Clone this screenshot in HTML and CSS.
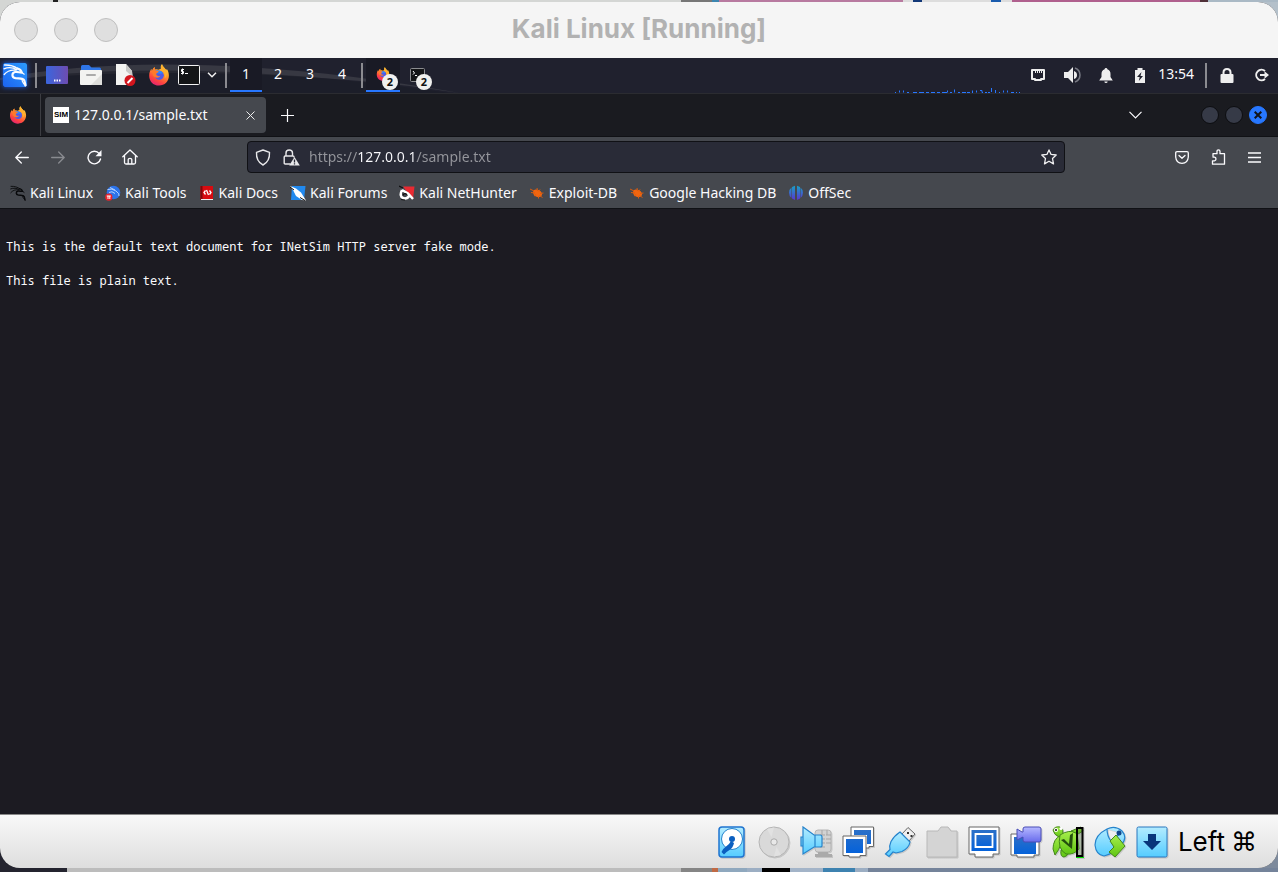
FILE: index.html
```html
<!DOCTYPE html>
<html lang="en">
<head>
<meta charset="utf-8">
<title>Kali Linux [Running]</title>
<link rel="stylesheet" href="styles.css">
</head>
<body>
<svg class="defs" aria-hidden="true">
  <defs>
    <linearGradient id="fire" x1="0.8" y1="0" x2="0.3" y2="1"><stop offset="0" stop-color="#ffe14a"/><stop offset=".4" stop-color="#ff9a2b"/><stop offset=".75" stop-color="#ff4540"/><stop offset="1" stop-color="#e62370"/></linearGradient>
    <linearGradient id="kaliBlue" x1="0" y1="1" x2="1" y2="0"><stop offset="0" stop-color="#1c63f0"/><stop offset="1" stop-color="#2c9bff"/></linearGradient>
    <linearGradient id="desk" x1="0" y1="0" x2="1" y2="0"><stop offset="0" stop-color="#3a66de"/><stop offset="1" stop-color="#6e4cb0"/></linearGradient>
    <linearGradient id="sky" x1="0" y1="0" x2="0" y2="1"><stop offset="0" stop-color="#b4ecff"/><stop offset="1" stop-color="#55ccff"/></linearGradient>
    <linearGradient id="royal" x1="0" y1="0" x2="0" y2="1"><stop offset="0" stop-color="#2b70c8"/><stop offset="1" stop-color="#0562da"/></linearGradient>
    <linearGradient id="cam" x1="0" y1="0" x2="0" y2="1"><stop offset="0" stop-color="#b5b8ff"/><stop offset="1" stop-color="#686bec"/></linearGradient>
    <linearGradient id="leaf" x1="0" y1="0" x2="0" y2="1"><stop offset="0" stop-color="#a6ee4c"/><stop offset="1" stop-color="#5fc512"/></linearGradient>
    <linearGradient id="off" x1="0" y1="0" x2="0" y2="1"><stop offset="0" stop-color="#18a0c8"/><stop offset="1" stop-color="#5a35cf"/></linearGradient>
    <symbol id="firefox" viewBox="0 0 24 24">
      <path fill="url(#fire)" d="M12 23.5C5.500 23.500 1.300 18.500 1.300 12.700 1.300 9.300 2.600 6.800 3.700 5.300L4.300 7.500C5 5.500 6 4 7.200 3.200L7.500 6C9 5.300 10.600 5.600 11.500 6.300L14.200 5C13.500 3.300 14 1.500 15.300.400 16 3 18.400 4.500 20 6.800L20.400 5.200C22 7.400 22.800 10 22.800 12.800 22.800 18.700 18.300 23.500 12 23.500Z"/>
      <circle cx="12.300" cy="12.400" r="5" fill="#515ae6"/>
      <path fill="#2e86ff" d="M7.400 7.200C10 6.500 14 6.600 16.500 10L13.500 10.500 9 10Z"/>
      <path fill="#ffb12e" d="M15.300.400C16 3 18.400 4.500 20 6.800 21.500 9.500 20.800 13.500 18.200 15.700 19 12 18 8.500 15.500 7.200 14 5.500 13.500 2.500 15.300.400Z"/>
      <path fill="#ff7a2b" d="M3.700 5.300 4.300 7.500 7.200 3.200 7.500 6.500C9 6.700 9.300 7.600 11.800 7.900 11.800 9.500 9 9.500 9 11 9 12.500 11 14 13.500 12.800 12.500 15.300 8 16 5.500 12.500Z"/>
    </symbol>
    <symbol id="dragon" viewBox="0 0 24 24">
      <g fill="none" stroke="currentColor" stroke-linecap="round">
        <path stroke-width="1.300" d="M1.500 2C7 1.800 11 3 14.500 5.500M1 5.800C5 4.200 10 4.500 14 6.800M1.200 11.500C4 8 8 6.600 13 7.200"/>
        <path stroke-width="2.200" d="M14.500 5.500C17 6.300 18.300 7.500 18.800 9.500 17 9.800 14.500 8.500 12 9 8.500 10 8.500 14.500 12.500 15.200 17 15.700 20 15 21.300 17.500 21.900 19.500 22.300 21 22.500 22.500"/>
        <path stroke-width="1.200" d="M18.800 9.500 21.200 11.200M19.500 15.500C18 17.500 19.500 19.500 22.500 22.500"/>
      </g>
    </symbol>
    <symbol id="spider" viewBox="0 0 16 16">
      <ellipse cx="8.500" cy="8.300" rx="4.800" ry="3.500" fill="#f06510" transform="rotate(28 8.500 8.300)"/>
      <path stroke="#d85c10" stroke-width="1" fill="none" d="M1 4 5 6M2 7.500 6 8M5 11 7 9.500M8 3 8.500 6M11 4.500 10 6.500M14.500 8 11 8.500M13.500 12.500 10.500 10.500M9.500 13.500 9.500 11"/>
    </symbol>
  </defs>
</svg>

<div class="backdrop-top"></div>
<main class="vm">
  <header class="titlebar">
    <div class="lights">
      <button class="light" aria-label="Close window"></button>
      <button class="light" aria-label="Minimise window"></button>
      <button class="light" aria-label="Zoom window"></button>
    </div>
    <h1 class="title">Kali Linux [Running]</h1>
  </header>

  <nav class="panel" aria-label="Desktop panel">
    <svg class="streak" viewBox="0 0 460 35" aria-hidden="true"><path fill="#373842" d="M0 20C110 0 260 0 460 35 300 10 120 12 0 22Z"/><path fill="#1b1c27" d="M60 16C180 8 300 14 450 35H0V24Z" opacity=".6"/></svg>
    <button class="kali" aria-label="Applications"><svg width="24" height="24" viewBox="0 0 24 24"><rect width="24" height="24" rx="2" fill="url(#kaliBlue)"/><use href="#dragon" width="24" height="24"/></svg></button>
    <i class="sep"></i>
    <button class="launch" aria-label="Show desktop"><svg width="22" height="18" viewBox="0 0 22 18"><rect width="22" height="18" rx="1" fill="url(#desk)"/><path stroke="#fff" stroke-width="2" stroke-dasharray="1.500 1" d="M8 14.500h6.500"/></svg></button>
    <button class="launch" aria-label="File manager"><svg width="22" height="20" viewBox="0 0 22 20"><path fill="#2f76e8" d="M1 6V1.500Q1 0 2.500 0H9l2.500 2.500H19.500Q21 2.500 21 4V8H1Z"/><rect y="5" width="22" height="15" rx="1" fill="#f3f3f1"/><path fill="#dededb" d="M22 9V20H11Z"/><path stroke="#aaa" stroke-width="2" stroke-linecap="round" d="M7 10h8"/></svg></button>
    <button class="launch" aria-label="Text editor"><svg width="22" height="22" viewBox="0 0 22 22"><path fill="#f4f4f2" d="M2 0H12L18 7V21H2Z"/><path fill="#c9c9c7" d="M12 0 18 7 19 13 12 7Z"/><circle cx="16" cy="16.500" r="5.500" fill="#d3151d"/><path stroke="#fff" stroke-width="2" d="M13.500 19 18.500 14"/></svg></button>
    <button class="launch" aria-label="Firefox"><svg width="22" height="22"><use href="#firefox"/></svg></button>
    <button class="launch term" aria-label="Terminal"><svg width="22" height="20" viewBox="0 0 22 20"><rect x=".5" y=".5" width="21" height="19" rx="1" fill="#141517" stroke="#f2f2f2"/><path fill="none" stroke="#fff" d="M6 4.500H3.500V6.500H5.500V8.500H3M4.500 3.500V9.500M7 8.500H10"/></svg></button>
    <button class="more" aria-label="More terminals"><svg width="10" height="6" viewBox="0 0 10 6"><path fill="none" stroke="#eee" stroke-width="1.500" d="M1 .7 5 4.700 9 .7"/></svg></button>
    <i class="sep"></i>
    <button class="space current">1</button>
    <button class="space">2</button>
    <button class="space">3</button>
    <button class="space">4</button>
    <i class="sep"></i>
    <button class="task current" aria-label="Firefox windows"><svg width="14" height="14"><use href="#firefox"/></svg><span class="badge">2</span></button>
    <button class="task" aria-label="Terminal windows"><svg width="15" height="14" viewBox="0 0 15 14"><rect x=".5" y=".5" width="14" height="13" rx="1" fill="#141517" stroke="#8c8d90"/><path fill="none" stroke="#fff" d="M3 3 4.500 5 3 6.500M5 7.500H7"/></svg><span class="badge">2</span></button>
    <svg class="cpu" width="126" height="5" viewBox="0 0 126 5" aria-hidden="true"><path stroke="#2777ff" stroke-width="1" fill="none" d="M0 4.500H1M4.500 2.500V4.500M8.500 2.500V4.500M12 4.500H14M18 4.500H22M24 4.500H29M31 4.500H34M36 4.500H40M42 4.500H45M47 4.500H52M52.500 2.500V4.500M55 4.500H57M59.500 1.500V4.500M63 4.500H65M67 4.500H71M72 4.500H75M77.500 2.500V5M81.500 2.500V4.500M85 2.500H87V4.500H88M90 4.500H92M93 4.500H95M96.500 0V4M100.500 2V5M104 4.500H105M108.500 2.500V4.500M112.500 2.500V4.500M116 4.500H119M121 4.500H122M124 4.500H125"/></svg>
    <button class="tray" aria-label="Network"><svg width="14" height="12" viewBox="0 0 14 12"><path fill="none" stroke="#eee" stroke-width="2" stroke-linejoin="round" d="M1 1H13V10H10V11H4V10H1Z"/><path stroke="#eee" d="M4.500 1V4M6.500 1V4M8.500 1V4M10.500 1V4"/></svg></button>
    <button class="tray" aria-label="Volume"><svg width="17" height="16" viewBox="0 0 17 16"><path fill="#eee" d="M0 5H4L9 0V16L4 11H0ZM10 4Q13 5 13 8T10 12Z"/><path fill="none" stroke="#777983" stroke-width="1.500" d="M11 1Q16 3 16 8T11 15"/></svg></button>
    <button class="tray" aria-label="Notifications"><svg width="14" height="15" viewBox="0 0 14 15"><path fill="#eee" d="M7 0Q8.300 0 8.400 1.300 11.500 2.300 11.500 6V9L13.800 12.500H.2L2.500 9V6Q2.500 2.300 5.600 1.300 5.700 0 7 0ZM5.300 13.500H8.700Q8.500 15 7 15T5.300 13.500Z"/></svg></button>
    <button class="tray" aria-label="Battery"><svg width="10" height="15" viewBox="0 0 10 15"><path fill="#eee" d="M2.500 0H7.500V2H10V15H0V2H2.500Z"/><path fill="#20212d" d="M6.500 4 2 9H4.700L3.800 13 8 8H5.500Z"/></svg></button>
    <time class="clock">13:54</time>
    <i class="sep"></i>
    <button class="tray" aria-label="Lock screen"><svg width="14" height="15" viewBox="0 0 14 15"><rect x=".5" y="6" width="13" height="9" rx="1" fill="#eee"/><path fill="none" stroke="#eee" stroke-width="2" d="M3.500 7V4.500Q3.500 1 7 1T10.500 4.500V7"/></svg></button>
    <button class="tray" aria-label="Log out"><svg width="15" height="14" viewBox="0 0 15 14"><path fill="none" stroke="#eee" stroke-width="2" d="M11 3A5.300 5.300 0 1 0 11 11"/><path fill="#eee" d="M6 6H10.500V3.300L15 7 10.500 10.700V8H6Z"/></svg></button>
  </nav>

  <div class="tabs">
    <button class="view" aria-label="Firefox View"><svg width="18" height="18"><use href="#firefox"/></svg></button>
    <div class="tab">
      <span class="favicon">SIM</span>
      <span class="tab-name">127.0.0.1/sample.txt</span>
      <button class="tab-close" aria-label="Close tab"><svg width="9" height="9" viewBox="0 0 9 9"><path stroke="#eee" d="M.5.5 8.500 8.500M8.500.5.5 8.500"/></svg></button>
    </div>
    <button class="new-tab" aria-label="New tab"><svg width="13" height="13" viewBox="0 0 13 13"><path stroke="#fbfbfe" d="M6.500 0V13M0 6.500H13" stroke-width="1.200"/></svg></button>
    <button class="all-tabs" aria-label="List all tabs"><svg width="13" height="8" viewBox="0 0 13 8"><path fill="none" stroke="#fbfbfe" stroke-width="1.200" d="M.5.8 6.500 6.800 12.500.8"/></svg></button>
    <div class="window-buttons">
      <button class="dot" aria-label="Minimise"></button>
      <button class="dot" aria-label="Maximise"></button>
      <button class="dot close" aria-label="Close"><svg width="8" height="8" viewBox="0 0 8 8"><path stroke="#11131a" stroke-width="2" d="M.7.7 7.300 7.300M7.300.7.7 7.300"/></svg></button>
    </div>
  </div>

  <div class="toolbar">
    <button class="tool" aria-label="Back"><svg width="14" height="13" viewBox="0 0 14 13"><path fill="none" stroke="#fbfbfe" stroke-width="1.300" stroke-linecap="round" stroke-linejoin="round" d="M13.300 6.500H.8M6.300 1 .8 6.500 6.300 12"/></svg></button>
    <button class="tool" aria-label="Forward" disabled><svg width="14" height="13" viewBox="0 0 14 13"><path fill="none" stroke="#898b90" stroke-width="1.300" stroke-linecap="round" stroke-linejoin="round" d="M.7 6.500H13.200M7.700 1 13.200 6.500 7.700 12"/></svg></button>
    <button class="tool" aria-label="Reload"><svg width="15" height="15" viewBox="0 0 15 15"><path fill="none" stroke="#fbfbfe" stroke-width="1.400" stroke-linecap="round" d="M13.500 9A6.300 6.300 0 1 1 12.300 3.600"/><path fill="#fbfbfe" d="M14.500 0V6.300H8.500Z"/></svg></button>
    <button class="tool" aria-label="Home"><svg width="16" height="16" viewBox="0 0 16 16"><path fill="none" stroke="#fbfbfe" stroke-width="1.300" stroke-linecap="round" stroke-linejoin="round" d="M.8 7.800 8 1 15.200 7.800M2.500 6.500V13.500Q2.500 15 4 15H12Q13.500 15 13.500 13.500V6.500M6.200 15V10.500Q6.200 9.300 8 9.300T9.800 10.500V15"/></svg></button>
    <div class="address">
      <button class="inner" aria-label="Tracking protection"><svg width="16" height="17" viewBox="0 0 16 17"><path fill="none" stroke="#e8e8ea" stroke-width="1.400" stroke-linejoin="round" d="M8 1 14.500 3.300Q15 12.500 8 16 1 12.500 1.500 3.300Z"/></svg></button>
      <button class="inner" aria-label="Connection not secure"><svg width="17" height="17" viewBox="0 0 17 17"><path fill="none" stroke="#e8e8ea" stroke-width="1.400" stroke-linejoin="round" d="M7.500 15H2.200Q1.200 15 1.200 14V8Q1.200 7 2.200 7H10Q11 7 11 8V8.500M3 7V4Q3 1 6.200 1T9.500 4V7"/><path fill="#e8e8ea" d="M11.500 8 16.800 16.500H6.200Z"/><path stroke="#292b37" stroke-width="1.300" d="M11.500 10.500V13.500M11.500 14.300V15.500"/></svg></button>
      <input class="url" aria-label="Address" value="https://127.0.0.1/sample.txt">
      <button class="inner" aria-label="Bookmark this page"><svg width="16" height="16" viewBox="0 0 16 16"><path fill="none" stroke="#f0f0f2" stroke-width="1.300" stroke-linejoin="round" d="M8 .9 10.100 5.400 15.200 6 11.500 9.500 12.500 14.900 8 12.200 3.500 14.900 4.500 9.500.8 6 5.900 5.400Z"/></svg></button>
    </div>
    <button class="tool" aria-label="Save to Pocket"><svg width="14" height="13" viewBox="0 0 14 13"><path fill="none" stroke="#fbfbfe" stroke-width="1.300" stroke-linecap="round" stroke-linejoin="round" d="M2 .7H12Q13.300.7 13.300 2V6Q12.800 12.300 7 12.300T.7 6V2Q.7.7 2 .7ZM4 4.500 7 7.300 10 4.500"/></svg></button>
    <button class="tool" aria-label="Extensions"><svg width="15" height="16" viewBox="0 0 15 16"><path fill="none" stroke="#fbfbfe" stroke-width="1.300" stroke-linejoin="round" d="M2 7.500V4.700H6V2.500Q6 .8 7.500.8T9 2.500V4.700H13.500V15.200H1.500V11.800H3.500Q5 11.500 5 10T3.500 8.200H1.500"/></svg></button>
    <button class="tool" aria-label="Application menu"><svg width="13" height="11" viewBox="0 0 13 11"><path stroke="#fbfbfe" stroke-width="1.300" d="M0 1H13M0 5.500H13M0 10H13"/></svg></button>
  </div>

  <nav class="bookmarks" aria-label="Bookmarks">
    <a href="#"><svg class="black" width="16" height="16"><use href="#dragon"/></svg>Kali Linux</a>
    <a href="#"><svg width="16" height="16" viewBox="0 0 16 16"><circle cx="8.500" cy="7.500" r="6.800" fill="#2b73ea"/><path fill="none" stroke="#b4d2ff" d="M2.500 4.500Q7 3 11 6T14 11M4 7.500Q7 5.500 10 8.500M5 2.500 10 5"/><circle cx="3.800" cy="12.200" r="3.600" fill="#e9232b"/><path fill="none" stroke="#fff" d="M1.800 11H5.800M3 11V14M4.800 11V14"/></svg>Kali Tools</a>
    <a href="#"><svg width="16" height="16" viewBox="0 0 16 16"><path fill="#d80b10" d="M1.500 1H14V15H1.500Z"/><path fill="#7d070b" d="M1.500 1H3.500V15H1.500Z"/><path stroke="#eee" d="M2 14.500H14"/><path fill="none" stroke="#fff" stroke-width="1.300" d="M6.500 5.500 5 7.500 6.500 9.500M10.500 5.500 12 7.500 10.500 9.500M7.500 5 9.500 10"/></svg>Kali Docs</a>
    <a href="#"><svg width="16" height="16" viewBox="0 0 16 16"><path fill="#2189ee" d="M2 1H15.500L14 15H1Z"/><path fill="#fff" d="M0 1 6 3.500 11 7.500 16 15.500 12 15 6 11 3.500 6Z"/><path stroke="#111" d="M0 2 4 5M10 12.500 15 15.500"/></svg>Kali Forums</a>
    <a href="#"><svg width="16" height="16" viewBox="0 0 16 16"><path fill="#e92a32" d="M4 1.500H15.500L14 14.500 10 10Z"/><path fill="none" stroke="#fff" stroke-width="2.500" d="M3 5Q0 11 4 13 8 14.500 10.500 10.500M3 5 9 8.500 14 14"/><path stroke="#111" stroke-width="1.200" fill="none" d="M0 1 4 3M4 10.500Q5 7.500 8 9.500M2 14.500 6 15"/></svg>Kali NetHunter</a>
    <a href="#"><svg width="16" height="16"><use href="#spider"/></svg>Exploit-DB</a>
    <a href="#"><svg width="16" height="16"><use href="#spider"/></svg>Google Hacking DB</a>
    <a href="#"><svg width="16" height="16" viewBox="0 0 16 16"><path fill="url(#off)" d="M3.500 2.500V13Q1 11 1 7.700T3.500 2.500ZM4 2 7 .8V15L4 13.500ZM9 .8 12 2V13.500L9 15ZM12.500 2.500Q15 4.500 15 7.700T12.500 13Z"/></svg>OffSec</a>
  </nav>

  <section class="page">
<pre class="document">

This is the default text document for INetSim HTTP server fake mode.

This file is plain text.
</pre>
  </section>

  <footer class="status">
    <button class="device" aria-label="Hard disks"><svg viewBox="0 0 32 32"><rect x="3" y="1" width="25" height="30" rx="3" fill="url(#sky)" stroke="#1f74d0" stroke-width="1.500"/><circle cx="16" cy="13" r="10.500" fill="#fff" stroke="#2583cc" stroke-width="1"/><circle cx="16" cy="13" r="3" fill="#0b5fc0"/><path fill="#0b5fc0" d="M15 15 18 17Q17 22 13.500 24 10 26 8 28.500L5.500 26Q7 22.500 10 20.500 13 19 15 15Z"/></svg></button>
    <button class="device" aria-label="Optical drives"><svg viewBox="0 0 32 32"><circle cx="16" cy="16" r="15" fill="#d9d9d9" stroke="#b4b4b4"/><circle cx="16" cy="16" r="3.200" fill="#e8e8e8" stroke="#aaa"/><path fill="#e1e1e1" d="M16 1.500 13.500 11 9 3ZM16 30.500 18.500 21 23 29Z"/></svg></button>
    <button class="device" aria-label="Audio"><svg viewBox="0 0 32 32"><rect x="15" y="4" width="16" height="22" rx="3" fill="#d2d2d2" stroke="#b5b5b5"/><path stroke="#a5a5a5" fill="none" d="M20 9H25M20 13H25M20 17H25M20 21H25M26 9H31M26 13H31M26 17H31M22 4V9M27 4V9"/><path fill="#aaa" d="M18 26H28V28H32V31H15V28H18Z"/><path fill="url(#sky)" stroke="#2583cc" stroke-width="1.200" d="M1 11H3V20H1ZM3 1 14 9H20Q22 9 22 11V20Q22 21 20 21H14L3 28ZM15 9V21"/></svg></button>
    <button class="device" aria-label="Network"><svg viewBox="0 0 32 32"><g fill="#fff" stroke="#666"><path d="M9 1H31.500V20.500H27V22H14V20.500H9Z"/><path d="M1 10H24V29.500H18V31H7V29.500H1Z"/></g><path fill="url(#royal)" d="M12 4H29V18H25V9H12ZM4 13H21V27H4Z"/></svg></button>
    <button class="device" aria-label="USB"><svg viewBox="0 0 32 32"><path fill="#eee" stroke="#666" d="M24 1.500 31 8 25 15 18 8Z"/><path fill="#333" d="M23 6h2v2h-2zM26.500 9h2v2h-2z"/><path fill="url(#sky)" stroke="#2583cc" stroke-width="1.200" d="M16 6 26 16Q25 22 18 25.500L12 27 9 26 5 30.500 1.500 28 6 23.500Q5 20 7 15.500 10 10 16 6Z"/></svg></button>
    <button class="device" aria-label="Shared folders"><svg viewBox="0 0 32 32"><path fill="#d4d4d4" stroke="#b8b8b8" d="M1 5H12L15 1H22L25 5H31V31H1Z"/></svg></button>
    <button class="device" aria-label="Display"><svg viewBox="0 0 32 32"><path fill="#fff" stroke="#666" d="M1 1H31V28H25V31H7V28H1Z"/><path fill="url(#royal)" d="M3.500 4H28.500V25H3.500Z"/><path fill="url(#royal)" stroke="#fff" stroke-width="1.800" d="M7.500 8H24.500V21H7.500Z"/></svg></button>
    <button class="device" aria-label="Recording"><svg viewBox="0 0 32 32"><path fill="#fff" stroke="#666" d="M1 8H29V29H24V31H7V29H1Z"/><path fill="url(#royal)" d="M4 11H26V28H4Z"/><path fill="url(#cam)" stroke="#494cb5" d="M7 3 12 6H13V3Q13 1 15 1H29Q31 1 31 3V14Q31 16 29 16H15Q13 16 13 14V11L7 14Z"/></svg></button>
    <button class="device" aria-label="CPU execution"><svg viewBox="0 0 32 32"><g fill="url(#leaf)" stroke="#43861a"><path d="M9 9Q1 13 1 23L3 29Q7 24 9 18ZM9 24Q8 31 12 31 16 30 16 27Z"/><path d="M1 4Q3 0 8 1 12 4 11 8L7 11Q2 9 1 4Z"/><path d="M8 9Q17 3 25 7L27 23Q22 29 14 28 5 23 8 9Z"/><path d="M19 5 29 1 31 5 26 8Z"/></g><circle cx="4" cy="4" r="2" fill="#fff"/><circle cx="4" cy="4" r="1" fill="#111"/><circle cx="9" cy="2.500" r="1.500" fill="#fff"/><path fill="#244f0e" d="M9 14 12 13 17 18 18 9 21 7 20 23Z"/><rect x="25" y="2" width="6" height="28" fill="#5f8050" fill-opacity=".4"/><path fill="none" stroke="#000" stroke-width="2" d="M25 30V2H30.500V30Z"/><path stroke="#0d0" d="M24 31.500H32"/></svg></button>
    <button class="device" aria-label="Mouse integration"><svg viewBox="0 0 32 32"><path fill="url(#sky)" stroke="#2583cc" stroke-width="1.200" d="M13 3Q21-1 28 5 34 12 27 19 19 28 10 30 2 29 1 19 1 9 13 3ZM13 3Q13 10 17 15L27 7"/><circle cx="25" cy="7" r="2.500" fill="#104589"/><path fill="url(#leaf)" stroke="#43861a" d="M16 15 22 9 31 20 21 31 15 26 20 21Z"/></svg></button>
    <button class="device" aria-label="Keyboard capture"><svg viewBox="0 0 32 32"><rect x="1" y="1" width="30" height="30" rx="1.500" fill="url(#sky)" stroke="#2876be"/><path fill="#08357b" d="M12 8H20V15H25L16 24 7 15H12Z"/></svg></button>
    <span class="host-key">Left <span class="command">⌘</span></span>
  </footer>
</main>
<div class="backdrop-bottom"></div>
</body>
</html>
```
FILE: styles.css
```css
* { box-sizing: border-box; }

body {
  margin: 0;
  height: 100vh;
  display: flex;
  flex-direction: column;
  overflow: hidden;
  background:
    linear-gradient(90deg, #d4d6d4 50%, #b4c0ca 50%) top / 100% 50% no-repeat,
    linear-gradient(90deg, #24242f 50%, #7d8a9c 50%);
  font-family: "Noto Sans", sans-serif;
  font-size: 14px;
  line-height: 20px;
  color: #fbfbfe;
}

button {
  display: flex;
  align-items: center;
  justify-content: center;
  flex: none;
  padding: 0;
  border: 0;
  background: none;
  color: inherit;
  font: inherit;
}

svg { display: block; flex: none; }
.defs { position: absolute; width: 0; height: 0; }

.backdrop-top {
  flex: none;
  height: 2px;
  background: linear-gradient(90deg, #d4d6d4 53px, #222 53px 58px, #d4d6d4 58px 681px, #777 681px 712px, #3c86b0 712px 719px, #b87aa0 719px 903px, #ddd 903px 913px, #123878 913px 922px, #ddd 922px 991px, #1a5cae 991px 1001px, #ddd 1001px 1012px, #b0608e 1012px 1200px, #503038 1200px 1208px, #aab9c5 1208px);
}

.backdrop-bottom {
  flex: none;
  height: 4px;
  background: linear-gradient(90deg, #24242f 67px, #bcbcbc 67px 681px, #858585 681px 712px, #c06a45 712px 718px, #8fa8be 718px 747px, #9caec3 747px 762px, #000 762px 790px, #a3b4c8 790px 823px, #3d82b0 823px 855px, #9caec3 855px 868px, #74839a 868px);
}

.vm {
  flex: 1;
  min-height: 0;
  display: flex;
  flex-direction: column;
  overflow: hidden;
  border-radius: 20px;
  background: #1c1b22;
}

.titlebar {
  flex: none;
  display: grid;
  grid-template-columns: 1fr auto 1fr;
  align-items: center;
  height: 56px;
  padding: 0 14px;
  background: #f5f5f5;
}

.lights { display: flex; gap: 16px; }

.light {
  width: 24px;
  height: 24px;
  border: 1px solid #bfbfbf;
  border-radius: 50%;
  background: #dfdfdf;
}

.title {
  margin: 0;
  padding-bottom: 2px;
  font: 700 26px/32px Inter, sans-serif;
  color: #b2b2b2;
}

.panel {
  position: relative;
  flex: none;
  display: flex;
  align-items: flex-start;
  height: 36px;
  border-bottom: 1px solid #2b2c31;
  background: #20212e;
}

.panel > * { position: relative; }
.panel > .streak { position: absolute; left: 0; top: 0; width: 460px; height: 35px; }

.kali { width: 32px; height: 34px; }
.kali svg { margin-right: 2px; box-shadow: 0 0 5px #1e5ce0; }
.sep { flex: none; width: 2px; height: 25px; margin: 5px 3px; background: #8b8b90; }
.launch { width: 34px; height: 34px; }
.launch.term { width: 26px; }
.more { width: 20px; height: 34px; }
.space { width: 32px; height: 34px; padding-bottom: 2px; }
.task { width: 34px; height: 34px; }
.current { padding-bottom: 0; border-bottom: 2px solid #2777ff; background: #191a25; }

.badge {
  position: absolute;
  right: 2px;
  bottom: 2px;
  width: 16px;
  height: 16px;
  border-radius: 50%;
  background: #f0f0ee;
  color: #111;
  font: 700 11px/16px "Noto Sans", sans-serif;
}
.task.current .badge { bottom: 0; }

.cpu { align-self: flex-end; margin-left: auto; }
.tray { width: 34px; height: 34px; }
.clock { margin: 6px 8px 0 1px; }

.tabs {
  flex: none;
  display: flex;
  align-items: center;
  height: 43px;
  border-bottom: 1px solid #101115;
  background: #1a1b20;
}

.view { width: 41px; height: 42px; padding-right: 4px; border-right: 1px solid #3c3d42; }

.tab {
  display: flex;
  align-items: center;
  width: 221px;
  height: 36px;
  margin: 0 4px;
  padding-left: 8px;
  border-radius: 4px;
  background: #45484e;
}

.favicon {
  width: 16px;
  height: 16px;
  margin-right: 5px;
  background: #fff;
  color: #000;
  font: 700 8px/16px "Liberation Sans", sans-serif;
  text-align: center;
}

.tab-name { flex: 1; }
.tab-close { width: 32px; height: 32px; }
.new-tab { width: 35px; height: 36px; }
.all-tabs { width: 36px; height: 36px; margin-left: auto; margin-right: 48px; }
.window-buttons { display: flex; gap: 6px; padding-right: 11px; }

.dot {
  width: 18px;
  height: 18px;
  border: 1px solid #0c0d10;
  border-radius: 50%;
  background: #363a47;
}
.dot.close { border-color: #2777ff; background: #2777ff; }

.toolbar {
  flex: none;
  display: flex;
  align-items: center;
  height: 40px;
  padding: 0 6px 0 4px;
  background: #45484e;
}

.tool { width: 36px; height: 36px; }

.address {
  flex: 1;
  min-width: 0;
  display: flex;
  align-items: center;
  height: 32px;
  margin: 0 99px;
  padding: 0 1px;
  border: 1px solid #101115;
  border-radius: 4px;
  background: #292b37;
}

.inner { width: 28px; height: 28px; }

.url {
  flex: 1;
  min-width: 0;
  margin-left: 4px;
  padding: 0;
  border: 0;
  outline: 0;
  background: linear-gradient(90deg, #95969c 48px, #fbfbfe 48px 108px, #95969c 108px);
  background-clip: text;
  color: transparent;
  font-family: inherit;
  font-size: 14px;
  line-height: 20px;
}

.bookmarks {
  flex: none;
  display: flex;
  align-items: center;
  gap: 12px;
  height: 32px;
  padding: 0 10px;
  border-bottom: 1px solid #101115;
  background: #45484e;
}

.bookmarks a {
  display: flex;
  align-items: center;
  gap: 4px;
  color: #fbfbfe;
  white-space: nowrap;
  text-decoration: none;
}

.black { color: #08090b; }

.page { flex: 1; min-height: 0; padding: 12px 6px; }

.document {
  margin: 0;
  font: 12px/17px "Noto Sans Mono", "DejaVu Sans Mono", monospace;
}

.status {
  flex: none;
  display: flex;
  align-items: center;
  justify-content: flex-end;
  gap: 10px;
  height: 54px;
  padding-right: 21px;
  border-top: 1px solid #888;
  background: linear-gradient(#f8f8f8, #dedede);
}

.device { width: 32px; height: 32px; }
.device svg { width: 32px; height: 32px; filter: drop-shadow(1px 1px 0 #0002); }

.host-key {
  display: flex;
  align-items: center;
  gap: 6px;
  color: #000;
  font: 26px/32px Inter, sans-serif;
}
.command { font-family: "DejaVu Sans", sans-serif; }
```
